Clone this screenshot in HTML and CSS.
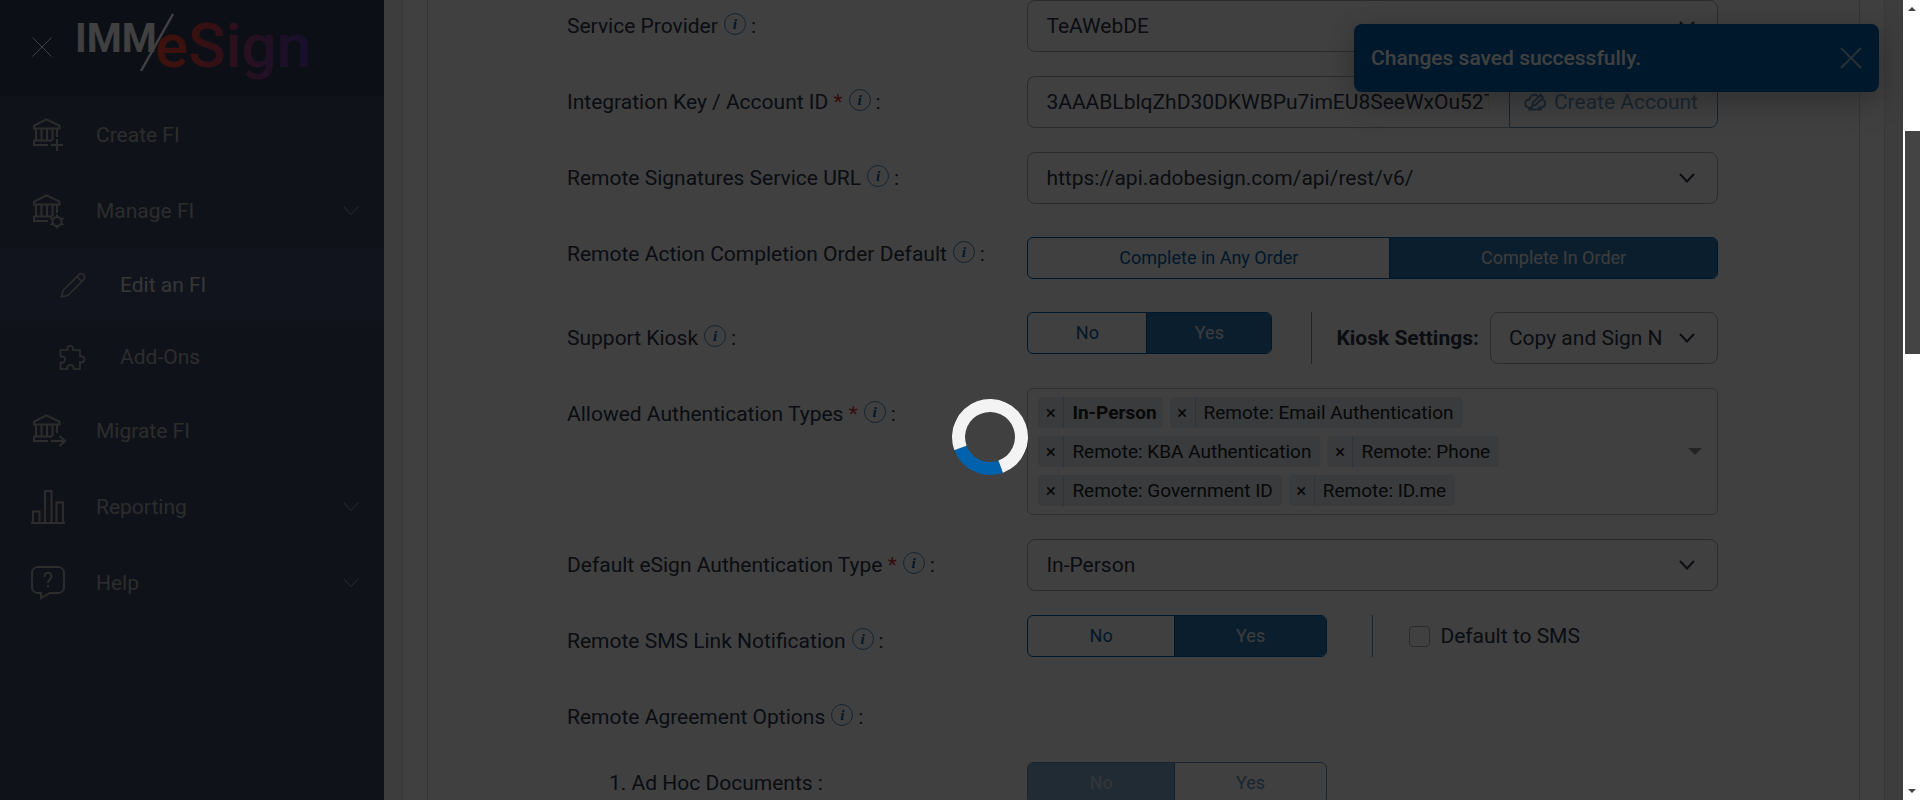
FILE: index.html
```html
<!DOCTYPE html>
<html lang="en">
<head>
<meta charset="utf-8">
<title>IMM/eSign - Edit an FI</title>
<link rel="stylesheet" href="styles.css">
</head>
<body>
<svg class="defs" aria-hidden="true">
  <symbol id="bank" viewBox="0 0 34 34"><path d="M3 10.500V7.600L15.500 1.400 28.500 7.600V10.500ZM5 11V22M10.500 11V22M16 11V22M21.500 11V22M26 11V19M2.500 22.500H21.500M3 22V27H17"/></symbol>
  <symbol id="chev" viewBox="0 0 16 10"><path d="M1 1L8 8.500 15 1"/></symbol>
</svg>
<div class="app">
  <aside class="sidebar">
    <header class="brand">
      <button class="close-menu" aria-label="Close menu"><svg viewBox="0 0 20 20"><path d="M.5 .5L19.500 19.500M19.500 .5L.5 19.500"/></svg></button>
      <svg class="logo" viewBox="0 0 250 84" role="img" aria-label="IMM/eSign">
        <defs><linearGradient id="lg" gradientUnits="userSpaceOnUse" x1="80" y1="0" x2="232" y2="0"><stop offset="0.15" stop-color="#f04438"/><stop offset="0.4" stop-color="#c9405a"/><stop offset="0.7" stop-color="#8a4090"/><stop offset="1" stop-color="#5c3cb0"/></linearGradient></defs>
        <text class="logo-imm" x="-1" y="42">IMM</text>
        <path d="M65 61L97 4" stroke="#fff" stroke-width="2.500"/>
        <text class="logo-esign" x="79" y="57" fill="url(#lg)">eSign</text>
      </svg>
    </header>
    <nav class="menu">
      <a class="item" href="#create"><svg class="ico"><use href="#bank" width="34" height="34"/><path d="M26 21V33M20 27H32"/></svg><span>Create FI</span></a>
      <a class="item" href="#manage"><svg class="ico"><use href="#bank" width="34" height="34"/><circle cx="26" cy="27.500" r="4.500"/><path d="M26 23V20.500M26 32V34.500M21.700 25.500L19.500 24M30.300 25.500L32.500 24M21.700 29.500L19.500 31M30.300 29.500L32.500 31"/></svg><span>Manage FI</span><svg class="chev"><use href="#chev"/></svg></a>
      <a class="item sub active" href="#edit"><svg class="ico"><path stroke-width="1.600" d="M6.500 29L8 22.500 24 6.700C27 4 31.500 8 28.800 11.500L13 27.300ZM22 8.700L27 13.500"/></svg><span>Edit an FI</span></a>
      <a class="item sub" href="#addons"><svg class="ico"><path stroke-width="1.700" d="M5.500 10H12.500C10.500 4.500 19.500 4.500 18 10H25V16.500C31 15 31 24 25 22V29H18.500C20 23.500 11 23.500 12.500 29H5.500V22.500C11.500 24 11.500 15 5.500 16.500Z"/></svg><span>Add-Ons</span></a>
      <a class="item" href="#migrate"><svg class="ico"><use href="#bank" width="34" height="34"/><path d="M20 27H34M28.500 22L34 27 28.500 32"/></svg><span>Migrate FI</span></a>
      <a class="item" href="#reporting"><svg class="ico"><path d="M0 33H34M2 33V21.500H8.500V33M14 33V1H20.500V33M25.500 33V12.500H32V33"/></svg><span>Reporting</span><svg class="chev"><use href="#chev"/></svg></a>
      <a class="item" href="#help"><svg class="ico"><path d="M7 1H27C30.500 1 33 3.500 33 7V21C33 24.500 30.500 27 27 27H19L10 32V27H7C3.500 27 1 24.500 1 21V7C1 3.500 3.500 1 7 1ZM13.500 11C13.500 5.500 20.500 5.500 20.500 10.500 20.500 13.500 17 13.500 17 17M17 19V21.500"/></svg><span>Help</span><svg class="chev"><use href="#chev"/></svg></a>
    </nav>
  </aside>

  <main class="main">
    <div class="card"><form class="form">
      <div class="row">
        <div class="lab"><label for="provider">Service Provider</label><span class="info">i</span><span>:</span></div>
        <div class="ctl"><div class="pick"><select id="provider"><option>TeAWebDE</option></select><svg class="arrow"><use href="#chev"/></svg></div></div>
      </div>
      <div class="row">
        <div class="lab"><label for="key">Integration Key / Account ID <em>*</em></label><span class="info">i</span><span>:</span></div>
        <div class="ctl"><input id="key" class="text" type="text" value="3AAABLblqZhD30DKWBPu7imEU8SeeWxOu52TQ8"><button type="button" class="create"><svg viewBox="0 0 22 18"><path d="M9 14.500H5C0 14 0 6.500 5.500 6.500 6 2 10.500 .5 13.500 3M18.500 7C22.500 8 22 14 17.500 14.500H14M4 16.500H18M8 13L9 9.500 16.500 2 19 4.500 11.500 12Z"/></svg>Create Account</button></div>
      </div>
      <div class="row">
        <div class="lab"><label for="url">Remote Signatures Service URL</label><span class="info">i</span><span>:</span></div>
        <div class="ctl"><div class="pick"><select id="url"><option>https://api.adobesign.com/api/rest/v6/</option></select><svg class="arrow"><use href="#chev"/></svg></div></div>
      </div>
      <div class="row order">
        <div class="lab"><span>Remote Action Completion Order Default</span><span class="info">i</span><span>:</span></div>
        <div class="ctl"><div class="toggle full"><button type="button">Complete in Any Order</button><button type="button" class="on">Complete In Order</button></div></div>
      </div>
      <div class="row">
        <div class="lab"><span>Support Kiosk</span><span class="info">i</span><span>:</span></div>
        <div class="ctl"><div class="toggle narrow"><button type="button">No</button><button type="button" class="on">Yes</button></div>
          <div class="kiosk"><label for="kiosk">Kiosk Settings:</label><div class="pick"><select id="kiosk"><option>Copy and Sign Now</option></select><svg class="arrow"><use href="#chev"/></svg></div></div></div>
      </div>
      <div class="row">
        <div class="lab"><span>Allowed Authentication Types <em>*</em></span><span class="info">i</span><span>:</span></div>
        <div class="ctl"><div class="multi"><ul class="chips">
          <li><button type="button" aria-label="Remove In-Person">×</button><b>In-Person</b></li>
          <li><button type="button" aria-label="Remove Email">×</button><span>Remote: Email Authentication</span></li>
          <li><button type="button" aria-label="Remove KBA">×</button><span>Remote: KBA Authentication</span></li>
          <li><button type="button" aria-label="Remove Phone">×</button><span>Remote: Phone</span></li>
          <li><button type="button" aria-label="Remove Government ID">×</button><span>Remote: Government ID</span></li>
          <li><button type="button" aria-label="Remove ID.me">×</button><span>Remote: ID.me</span></li>
        </ul><i class="caret"></i></div></div>
      </div>
      <div class="row">
        <div class="lab"><label for="deftype">Default eSign Authentication Type <em>*</em></label><span class="info">i</span><span>:</span></div>
        <div class="ctl"><div class="pick"><select id="deftype"><option>In-Person</option></select><svg class="arrow"><use href="#chev"/></svg></div></div>
      </div>
      <div class="row">
        <div class="lab"><span>Remote SMS Link Notification</span><span class="info">i</span><span>:</span></div>
        <div class="ctl"><div class="toggle wide"><button type="button">No</button><button type="button" class="on">Yes</button></div>
          <div class="sms"><input id="sms" type="checkbox"><label for="sms">Default to SMS</label></div></div>
      </div>
      <div class="row short">
        <div class="lab"><span>Remote Agreement Options</span><span class="info">i</span><span>:</span></div>
      </div>
      <div class="row nested">
        <div class="lab"><span>1. Ad Hoc Documents :</span></div>
        <div class="ctl"><div class="toggle wide disabled"><button type="button" class="on" disabled>No</button><button type="button" disabled>Yes</button></div></div>
      </div>
    </form></div>
  </main>
  <div class="toast" role="status"><span>Changes saved successfully.</span><button aria-label="Dismiss"><svg viewBox="0 0 22 22"><path d="M1 1L21 21M21 1L1 21"/></svg></button></div>
  <div class="overlay"></div>
  <div class="spinner" role="progressbar" aria-label="Loading"></div>
</div>
<div class="scrollbar" aria-hidden="true"><i class="up"></i><i class="thumb"></i><i class="down"></i></div>
</body>
</html>
```

FILE: styles.css
```css
* { box-sizing: border-box; }
body {
  margin: 0;
  height: 100vh;
  display: flex;
  overflow: hidden;
  background: #fff;
  font: 400 21px/26px Roboto, "Liberation Sans", sans-serif;
  color: #2c3548;
}
button, input, select { font: inherit; color: inherit; margin: 0; }
button { border: 0; background: none; padding: 0; }
svg { fill: none; stroke: currentColor; display: block; }
.defs { position: absolute; width: 0; height: 0; }
.app { position: relative; flex: 1; min-width: 0; display: flex; overflow: hidden; background: #f1f1f1; }

/* sidebar */
.sidebar { flex: none; width: 384px; background: #3c4863; color: #b0b0b0; }
.brand { height: 96px; padding: 10px 32px 0; display: flex; background: #303c54; color: #fff; }
.close-menu { flex: none; width: 20px; height: 20px; margin-top: 27px; }
.logo { flex: none; width: 250px; height: 84px; margin-left: 24px; stroke: none; }
.logo-imm { font-size: 40px; font-weight: 700; fill: #fff; }
.logo-esign { font-size: 62px; font-weight: 500; }
.menu { padding-top: 1px; }
.item { display: flex; align-items: center; height: 76px; padding: 0 25px 0 31px; color: inherit; text-decoration: none; }
.item span { flex: 1; margin-left: 31px; }
.ico { width: 34px; height: 34px; stroke-width: 2; overflow: visible; }
.chev { width: 16px; height: 10px; }
.sub { height: 72px; padding-left: 55px; }
.active { background: #445070; color: #d8d8d8; }
.active .ico { color: #b0b0b0; }

/* form */
.main { flex: 1; min-width: 0; margin: 0 18px; padding: 0 24px; background: #fdfdfd; border: solid #dcdcdc; border-width: 0 1px; }
.card { min-height: 100%; padding: 0 141px 0 139px; border: solid #d4d4d4; border-width: 0 1px; }
.form { display: flex; flex-direction: column; gap: 24px; }
.row { display: flex; align-items: flex-start; }
.lab { flex: 0 0 40%; display: flex; align-items: center; height: 52px; white-space: nowrap; }
.lab em { color: #e02b35; font-style: normal; }
.info { display: flex; align-items: center; justify-content: center; width: 22px; height: 22px; margin: -4px 5px 0 6px; border: 1px solid #5b93bd; border-radius: 50%; color: #0061ad; font: italic bold 15px/20px "Liberation Serif", serif; }
.ctl { flex: 1; min-width: 0; display: flex; }
.pick { position: relative; flex: 1; min-width: 0; }
.pick select { display: block; width: 100%; height: 52px; padding: 0 54px 0 18px; border: 1px solid #acacb4; border-radius: 8px; background: #fff; appearance: none; }
.arrow { position: absolute; right: 23px; top: 21px; width: 16px; height: 10px; stroke-width: 2; pointer-events: none; }
.text { flex: 1; min-width: 0; height: 52px; padding: 0 20px 0 18px; border: 1px solid #acacb4; border-right: 0; border-radius: 8px 0 0 8px; background: #fff; }
.create { display: flex; align-items: center; gap: 8px; padding: 0 19px 0 14px; border: 1px solid #5b8fb8; border-radius: 0 8px 8px 0; color: #6699c2; }
.create svg { width: 22px; height: 18px; stroke-width: 2; }
.order { height: 60px; }
.order .ctl { padding-top: 9px; }
.toggle { display: flex; height: 42px; border: 1px solid #0061ad; border-radius: 6px; overflow: hidden; font-size: 18px; color: #0061ad; }
.toggle button { flex: 1 1 auto; }
.toggle .on { background: #2e78b2; border-left: 1px solid #0061ad; color: #f0f0f0; }
.full { width: 100%; }
.narrow { width: 245px; }
.wide { width: 300px; }
.disabled { color: #6699c2; border-color: #6699c2; }
.disabled .on { background: #7fadd0; border: 0; border-right: 1px solid #4080b0; font-weight: 500; color: #c8d4de; }
.kiosk { flex: 1; display: flex; align-items: center; gap: 11px; margin-left: 39px; padding-left: 24px; border-left: 1px solid #8c8c94; }
.kiosk label { font-weight: 700; }
.multi { flex: 1; display: flex; align-items: center; padding: 8px 15px 8px 10px; border: 1px solid #bcbcbc; border-radius: 6px; background: #fff; }
.chips { flex: 1; display: flex; flex-wrap: wrap; gap: 8px 7px; margin: 0; padding: 0; list-style: none; font-size: 19px; color: #222; }
.chips li { display: flex; height: 31px; border-radius: 4px; background: #e2ebf2; line-height: 31px; }
.chips button { width: 26px; border-right: 1px solid #b9cfe4; }
.chips span { padding: 0 9px 0 8px; }
.chips b { padding: 0 6px 0 8px; }
.caret { border: solid transparent; border-width: 7px 7px 0; border-top-color: #8c8c8c; }
.sms { display: flex; align-items: center; height: 42px; margin-left: 45px; padding-left: 36px; gap: 10px; border-left: 1px solid #6d8ea8; }
.sms input { appearance: none; width: 21px; height: 21px; border: 1px solid #acacac; border-radius: 4px; background: #fff; }
.short { height: 47px; }
.nested .lab { height: 42px; padding-left: 42px; }

/* toast, overlay, spinner */
.toast { position: absolute; top: 24px; right: 24px; width: 525px; height: 68px; padding: 0 17px; display: flex; align-items: center; justify-content: space-between; border-radius: 8px; background: #0061ad; color: #fff; font-weight: 500; box-shadow: 0 8px 32px rgba(0, 0, 0, .3); }
.toast button { color: #9cbcd6; }
.toast svg { width: 22px; height: 22px; stroke-width: 2; }
.overlay { position: absolute; inset: 0; background: rgba(0, 0, 0, .75); }
.spinner { position: absolute; left: 50%; top: 50%; width: 76px; height: 76px; margin-top: -1px; border: 13px solid #f3f3f3; border-bottom-color: #0061ad; border-radius: 50%; transform: rotate(25deg); }

.scrollbar { flex: none; width: 17px; display: flex; flex-direction: column; align-items: center; background: #fff; }
.scrollbar .up { margin: 7px 0 120px; border: solid transparent; border-width: 0 4px 4px; border-bottom-color: #444; }
.thumb { width: 15px; height: 223px; align-self: flex-end; background: #444; }
.scrollbar .down { margin: auto 0 7px; border: solid transparent; border-width: 4px 4px 0; border-top-color: #444; }
```
